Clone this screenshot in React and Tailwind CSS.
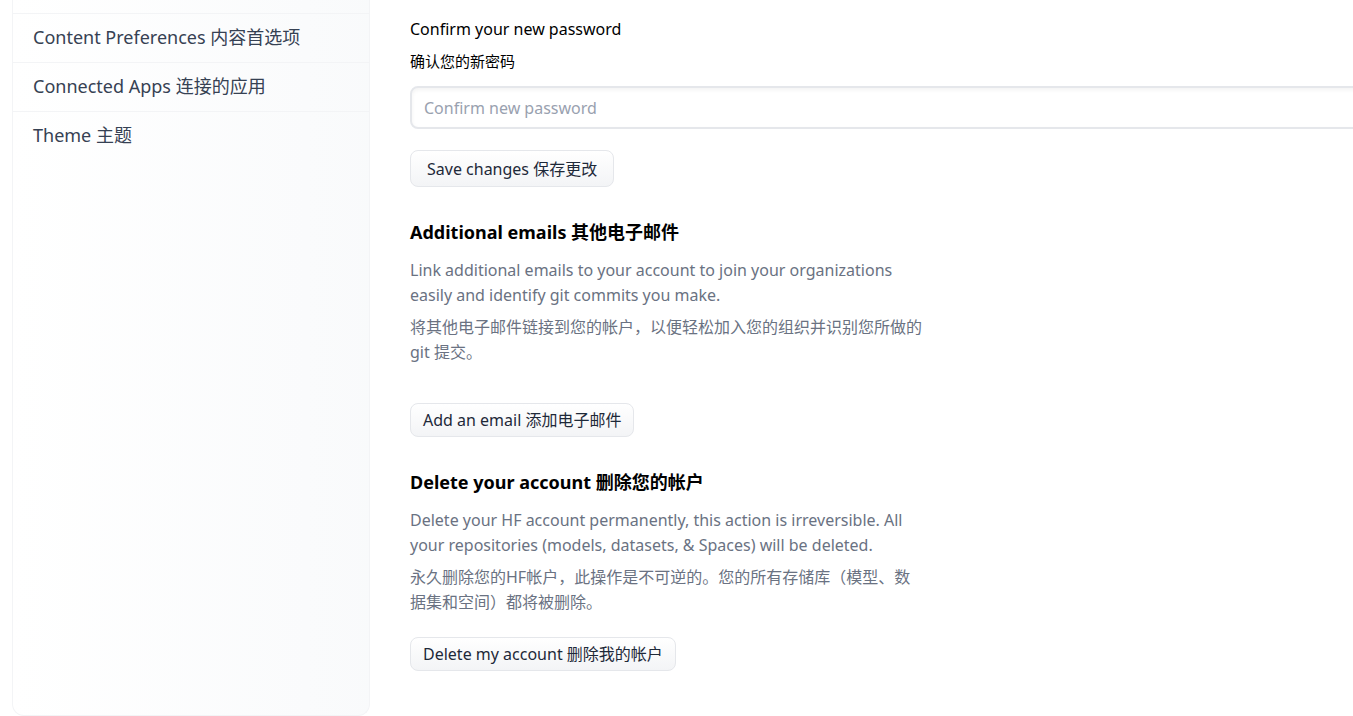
import React from "react";

const font = { fontFamily: '"Noto Sans", "Noto Sans CJK SC", sans-serif' };

function NavItem({ label }) {
  return (
    <div className="h-[49px] flex items-center px-5 pb-[2px] border-t border-gray-100 text-[18px] text-gray-700">
      {label}
    </div>
  );
}

function Section({ title, en, zh, button }) {
  return (
    <div className="flex flex-col">
      <h3 className="text-[18px] font-bold text-black leading-7">{title}</h3>
      <p className="mt-3 max-w-lg text-[16px] leading-[25px] text-gray-500">{en}</p>
      <p className="mt-[7px] max-w-lg text-[16px] leading-[25px] text-gray-500">{zh}</p>
      {button}
    </div>
  );
}

function Btn({ children, className = "" }) {
  return (
    <button
      className={
        "self-start rounded-lg border border-gray-200 bg-gradient-to-b from-white to-gray-100 px-3 text-[16px] text-gray-800 " +
        className
      }
    >
      {children}
    </button>
  );
}

export default function App() {
  return (
    <div className="min-h-[716px] bg-white overflow-hidden" style={font}>
      <div className="flex pl-3">
        <aside className="w-[358px] shrink-0 h-[716px] border-x border-b border-gray-100 rounded-b-xl bg-gradient-to-r from-white to-gray-50">
          <div className="h-[13px]" />
          <NavItem label="Content Preferences 内容首选项" />
          <NavItem label="Connected Apps 连接的应用" />
          <NavItem label="Theme 主题" />
        </aside>
        <main className="flex-1 pl-10 pt-[17px] flex flex-col min-w-0">
          <label className="text-[16px] leading-6 text-black">Confirm your new password</label>
          <span className="mt-[9px] text-[15px] leading-[22px] text-black">确认您的新密码</span>
          <input
            type="password"
            placeholder="Confirm new password"
            className="mt-[14px] h-[43px] w-[calc(100%+20px)] rounded-lg border-2 border-gray-200 bg-white px-3 text-[16px] placeholder:text-gray-400 shadow-inner outline-none"
          />
          <Btn className="mt-[21px] h-[37px] px-4">Save changes 保存更改</Btn>

          <div className="mt-[31px]">
            <Section
              title="Additional emails 其他电子邮件"
              en="Link additional emails to your account to join your organizations easily and identify git commits you make."
              zh="将其他电子邮件链接到您的帐户，以便轻松加入您的组织并识别您所做的git 提交。"
              button={<Btn className="mt-[38px] h-[34px]">Add an email 添加电子邮件</Btn>}
            />
          </div>

          <div className="mt-[31px]">
            <Section
              title="Delete your account 删除您的帐户"
              en="Delete your HF account permanently, this action is irreversible. All your repositories (models, datasets, & Spaces) will be deleted."
              zh="永久删除您的HF帐户，此操作是不可逆的。您的所有存储库（模型、数据集和空间）都将被删除。"
              button={<Btn className="mt-[22px] h-[34px]">Delete my account 删除我的帐户</Btn>}
            />
          </div>
        </main>
      </div>
    </div>
  );
}
